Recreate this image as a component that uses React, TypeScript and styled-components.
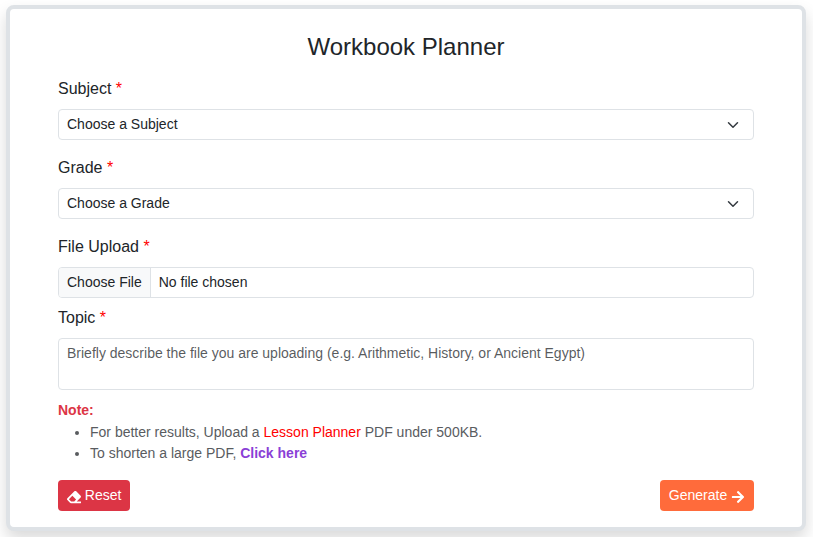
import React from "react";
import styled, { createGlobalStyle } from "styled-components";
import { FaArrowRight, FaEraser } from "react-icons/fa";

const GlobalStyle = createGlobalStyle`
  *, *::before, *::after { box-sizing: border-box; }
  body {
    margin: 0;
    overflow: hidden;
    background: #fff;
    color: #212529;
    font: 400 16px/1.5 "Liberation Sans", Arial, sans-serif;
  }
`;

const Page = styled.main`
  height: 537px;
  overflow: hidden;
  padding: 5px 7px 6px 6px;
`;

const Card = styled.form`
  display: flex;
  flex-direction: column;
  width: 800px;
  height: 526px;
  padding: 23px 48px 16px;
  border: 4px solid #dee2e6;
  border-radius: 8px;
  background: #fff;
  box-shadow: 0 8px 16px rgba(0, 0, 0, 0.15);
`;

const Title = styled.h1`
  margin: 0 0 16px;
  font-size: 24px;
  font-weight: 400;
  line-height: 29px;
  text-align: center;
`;

const Field = styled.div<{ $gap: number }>`
  display: flex;
  flex-direction: column;
  gap: 8px;
  margin-bottom: ${({ $gap }) => $gap}px;
`;

const Label = styled.label`
  line-height: 24px;
`;

const Required = styled.span`
  color: #f00;
`;

const Control = styled.div`
  display: flex;
  align-items: center;
  justify-content: space-between;
  height: 31px;
  padding: 0 13px 0 8px;
  border: 1px solid #dee2e6;
  border-radius: 4px;
  font-size: 14px;
  line-height: 21px;
`;

const FileControl = styled(Control)`
  justify-content: flex-start;
  padding: 0;
  overflow: hidden;
`;

const FileButton = styled.span`
  height: 29px;
  padding: 4px 8px;
  border-right: 1px solid #dee2e6;
  background: #f8f9fa;
`;

const FileName = styled.span`
  padding-left: 8px;
`;

const TextArea = styled.textarea`
  display: block;
  width: 100%;
  height: 52px;
  padding: 4px 8px;
  border: 1px solid #dee2e6;
  border-radius: 4px;
  resize: none;
  outline: none;
  font: 14px/21px "Liberation Sans", Arial, sans-serif;
  &::placeholder { color: rgba(33, 37, 41, 0.75); opacity: 1; }
`;

const Notes = styled.section`
  color: #595c5f;
  font-size: 14px;
  line-height: 21px;
`;

const NoteTitle = styled.strong`
  display: block;
  color: #dc3545;
`;

const NoteList = styled.ul`
  margin: 1px 0 0;
  padding-left: 32px;
`;

const ShortenLink = styled.a`
  color: #8a3fd6;
  font-weight: 700;
  text-decoration: none;
`;

const Actions = styled.div`
  display: flex;
  justify-content: space-between;
  margin-top: auto;
`;

const Button = styled.button<{ $color: string }>`
  display: flex;
  align-items: flex-start;
  gap: 3.8px;
  height: 31px;
  padding: 5px 9px;
  border: 0;
  border-radius: 4px;
  background: ${({ $color }) => $color};
  color: #fff;
  font: 14px/21px "Liberation Sans", Arial, sans-serif;
  svg { width: 14px; height: 14px; margin-top: 5px; }
`;

const Chevron = () => (
  <svg width="14" height="12" viewBox="0 0 16 16" fill="none" stroke="#343a40" strokeWidth="2" strokeLinecap="round" strokeLinejoin="round">
    <path d="m2 5 6 6 6-6" />
  </svg>
);

function FormField({ label, gap, children }: { label: string; gap: number; children: React.ReactNode }) {
  return (
    <Field $gap={gap}>
      <Label>{label} <Required>*</Required></Label>
      {children}
    </Field>
  );
}

export default function App() {
  return (
    <Page>
      <GlobalStyle />
      <Card>
        <Title>Workbook Planner</Title>
        <FormField label="Subject" gap={16}>
          <Control role="combobox">Choose a Subject<Chevron /></Control>
        </FormField>
        <FormField label="Grade" gap={16}>
          <Control role="combobox">Choose a Grade<Chevron /></Control>
        </FormField>
        <FormField label="File Upload" gap={8}>
          <FileControl><FileButton>Choose File</FileButton><FileName>No file chosen</FileName></FileControl>
        </FormField>
        <FormField label="Topic" gap={10}>
          <TextArea placeholder="Briefly describe the file you are uploading (e.g. Arithmetic, History, or Ancient Egypt)" />
        </FormField>
        <Notes>
          <NoteTitle>Note:</NoteTitle>
          <NoteList>
            <li>For better results, Upload a <Required>Lesson Planner</Required> PDF under 500KB.</li>
            <li>To shorten a large PDF, <ShortenLink href="#">Click here</ShortenLink></li>
          </NoteList>
        </Notes>
        <Actions>
          <Button type="button" $color="#dc3545"><FaEraser />Reset</Button>
          <Button type="button" $color="#ff6b3b">Generate<FaArrowRight /></Button>
        </Actions>
      </Card>
    </Page>
  );
}
